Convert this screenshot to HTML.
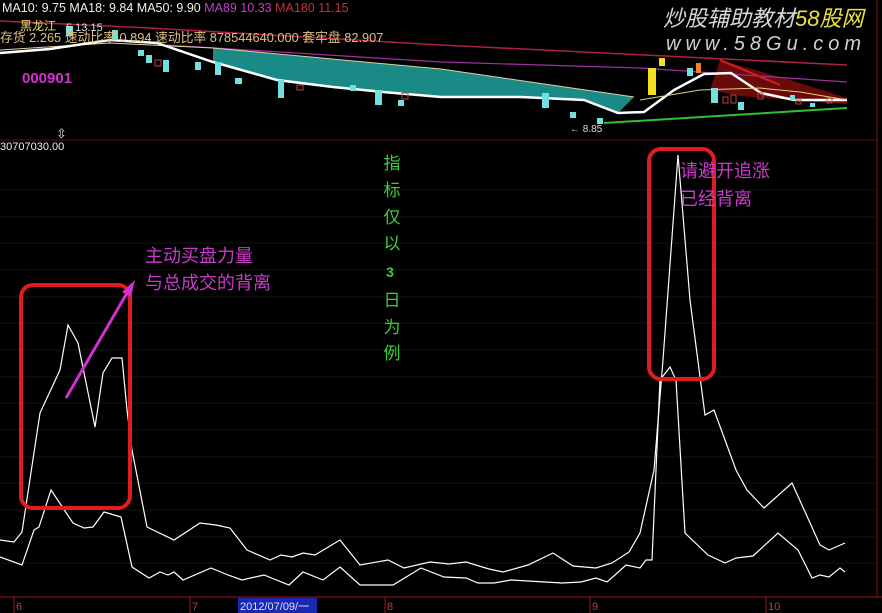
<!DOCTYPE html>
<html><head><meta charset="utf-8"><style>
html,body{margin:0;padding:0;background:#000;width:882px;height:613px;overflow:hidden}
svg{display:block}
text{font-family:"Liberation Sans","Noto Sans CJK SC",sans-serif}
</style></head><body>
<svg width="882" height="613" viewBox="0 0 882 613" xmlns="http://www.w3.org/2000/svg">
<rect width="882" height="613" fill="#000"/>
<g stroke="#141414" stroke-width="1">
<line x1="0" y1="190" x2="876" y2="190"/><line x1="0" y1="217" x2="876" y2="217"/>
<line x1="0" y1="243" x2="876" y2="243"/><line x1="0" y1="270" x2="876" y2="270"/>
<line x1="0" y1="297" x2="876" y2="297"/><line x1="0" y1="323" x2="876" y2="323"/>
<line x1="0" y1="350" x2="876" y2="350"/><line x1="0" y1="377" x2="876" y2="377"/>
<line x1="0" y1="403" x2="876" y2="403"/><line x1="0" y1="430" x2="876" y2="430"/>
<line x1="0" y1="457" x2="876" y2="457"/><line x1="0" y1="483" x2="876" y2="483"/>
<line x1="0" y1="510" x2="876" y2="510"/><line x1="0" y1="537" x2="876" y2="537"/>
<line x1="0" y1="563" x2="876" y2="563"/>
</g>
<line x1="0" y1="140" x2="877" y2="140" stroke="#3a0a0a" stroke-width="1.5"/>
<line x1="877" y1="0" x2="877" y2="597" stroke="#5a0a0a" stroke-width="1.5"/>
<line x1="0" y1="597" x2="882" y2="597" stroke="#6a1010" stroke-width="1.5"/>

<polygon points="213,48 441,69 634,97 618,113 584,100 521,97 441,97 383,92 333,87 277,80 213,62" fill="#1a8a86"/>
<polygon points="720,60 790,80 847,98 847,104 790,100 740,96 710,90" fill="#6a0a0a"/>
<polyline points="0,21 150,28 441,45 847,65" fill="none" stroke="#b02040" stroke-width="1.5"/>
<polyline points="167,45 441,62 641,68 847,82" fill="none" stroke="#a030a0" stroke-width="1.2"/>
<polyline points="0,50 110,43 213,48 441,69 634,97" fill="none" stroke="#e0d0a0" stroke-width="1"/>
<polyline points="0,53 50,49 110,40 157,43 213,62 277,80 333,87 383,92 441,97 521,97 584,100 618,113 644,112 674,90 704,74 731,73 761,93 794,100 847,100" fill="none" stroke="#fff" stroke-width="2.5"/>
<polyline points="604,123 734,115 847,108" fill="none" stroke="#30c030" stroke-width="2"/>
<polyline points="640,100 700,90 760,88 800,92 847,100" fill="none" stroke="#e0d080" stroke-width="1"/>
<line x1="720" y1="60" x2="780" y2="85" stroke="#d02020" stroke-width="2"/>
<g fill="#70e0e0">
<rect x="66" y="26" width="7" height="10"/><rect x="112" y="30" width="6" height="10"/>
<rect x="138" y="50" width="6" height="6"/><rect x="146" y="55" width="6" height="8"/><rect x="163" y="60" width="6" height="12"/>
<rect x="195" y="62" width="6" height="8"/><rect x="215" y="62" width="6" height="13"/>
<rect x="235" y="78" width="7" height="6"/><rect x="278" y="80" width="6" height="18"/>
<rect x="350" y="85" width="6" height="6"/><rect x="375" y="90" width="7" height="15"/>
<rect x="398" y="100" width="6" height="6"/><rect x="542" y="93" width="7" height="15"/>
<rect x="570" y="112" width="6" height="6"/><rect x="597" y="118" width="6" height="6"/>
<rect x="687" y="68" width="6" height="8"/><rect x="711" y="88" width="7" height="15"/><rect x="738" y="102" width="6" height="8"/>
<rect x="790" y="95" width="5" height="5"/><rect x="810" y="103" width="5" height="4"/>
</g>
<g fill="none" stroke="#c04040" stroke-width="1">
<rect x="155" y="60" width="6" height="6"/><rect x="297" y="85" width="6" height="5"/>
<rect x="402" y="93" width="6" height="6"/><rect x="723" y="97" width="5" height="6"/><rect x="731" y="95" width="5" height="8"/>
<rect x="758" y="93" width="5" height="6"/><rect x="796" y="100" width="5" height="4"/><rect x="827" y="98" width="5" height="5"/>
</g>
<rect x="648" y="68" width="8" height="27" fill="#f0e020"/>
<rect x="659" y="58" width="6" height="8" fill="#f0e020"/>
<rect x="696" y="63" width="5" height="10" fill="#f08030"/>
<text x="570" y="132" font-size="10" fill="#ddd">← 8.85</text>

<text x="2" y="12" font-size="12.5" fill="#f0f0e0">MA10: 9.75  MA18: 9.84  MA50: 9.90 <tspan fill="#c040c0">MA89  10.33</tspan> <tspan fill="#c03040">MA180  11.15</tspan></text>
<text x="20" y="30" font-size="12" fill="#f0e070">黑龙江</text>
<text x="66" y="31" font-size="11" fill="#ddd">5 13.15</text>
<text x="0" y="42" font-size="12.8" fill="#e0c080">存货 2.265  速动比率 0.894  速动比率 878544640.000  套牢盘 82.907</text>
<text x="22" y="83" font-size="15" font-weight="bold" fill="#d030d0">000901</text>
<text x="0" y="150" font-size="11" fill="#eee">30707030.00</text>
<text x="56" y="138" font-size="13" fill="#ddd">⇳</text>
<text x="663" y="26" font-size="22" font-style="italic" fill="#d8d8d8">炒股辅助教材<tspan fill="#e8e040">58股网</tspan></text>
<text x="666" y="50" font-size="20" font-style="italic" fill="#d0d0d0" letter-spacing="5">www.58Gu.com</text>

<polyline fill="none" stroke="#fff" stroke-width="1.2" points="0,540 14,542 22,532 40,413 60,370 68,325 78,343 95,427 103,373 112,358 122,358 127,410 132,450 147,527 174,540 200,523 216,525 230,528 247,550 270,560 281,555 292,557 303,553 315,555 340,540 360,565 388,560 404,568 430,562 449,564 466,562 489,569 503,572 528,565 553,553 573,566 596,568 612,563 629,552 640,533 654,470 663,360 678,155 690,300 705,415 714,410 736,470 747,490 764,508 792,483 820,545 829,550 845,543"/>
<polyline fill="none" stroke="#fff" stroke-width="1.2" points="0,557 22,565 34,530 39,527 51,490 73,523 84,528 93,527 104,512 121,517 132,567 149,578 160,572 168,575 174,572 183,580 211,568 228,575 242,580 264,575 289,585 303,572 323,580 340,567 360,585 393,585 421,568 444,577 466,578 478,583 494,583 511,580 562,583 581,582 596,578 607,582 615,575 626,565 640,568 646,560 652,560 660,380 670,367 676,380 685,533 708,555 725,563 736,558 753,556 778,533 798,550 812,578 820,575 829,577 840,568 845,572"/>

<rect x="21" y="285" width="109" height="223" rx="12" fill="none" stroke="#e01c1c" stroke-width="4"/>
<rect x="649" y="149" width="65" height="230" rx="12" fill="none" stroke="#e01c1c" stroke-width="4"/>
<line x1="66" y1="398" x2="127" y2="293" stroke="#d030d0" stroke-width="3"/>
<polygon points="135,280 122,292 131,297" fill="#d030d0"/>

<g font-size="18" fill="#cc3acc">
<text x="145" y="262">主动买盘力量</text>
<text x="145" y="289">与总成交的背离</text>
<text x="680" y="177">请避开追涨</text>
<text x="680" y="205">已经背离</text>
</g>
<g font-size="17" fill="#3ccc3c" text-anchor="middle">
<text x="392" y="169">指</text><text x="392" y="196">标</text><text x="392" y="223">仅</text><text x="392" y="249">以</text>
<text x="390" y="277" font-weight="bold" font-size="14">3</text>
<text x="392" y="306">日</text><text x="392" y="333">为</text><text x="392" y="359">例</text>
</g>

<g stroke="#8a2020" stroke-width="1">
<line x1="14" y1="597" x2="14" y2="613"/><line x1="190" y1="597" x2="190" y2="613"/>
<line x1="385" y1="597" x2="385" y2="613"/><line x1="590" y1="597" x2="590" y2="613"/>
<line x1="766" y1="597" x2="766" y2="613"/>
</g>
<rect x="238" y="598" width="79" height="15" fill="#1a2ab0"/>
<g font-size="11" fill="#c04040">
<text x="16" y="610">6</text><text x="192" y="610">7</text><text x="387" y="610">8</text><text x="592" y="610">9</text><text x="768" y="610">10</text>
</g>
<text x="240" y="610" font-size="11" fill="#e0e0ff">2012/07/09/一</text>
</svg>
</body></html>
